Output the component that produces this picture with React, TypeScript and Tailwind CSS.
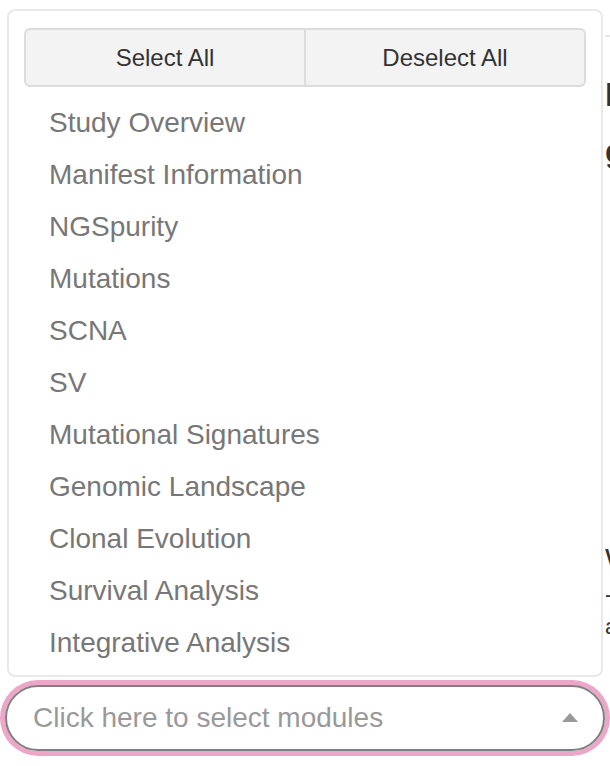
import React from "react";

const items = [
  "Study Overview",
  "Manifest Information",
  "NGSpurity",
  "Mutations",
  "SCNA",
  "SV",
  "Mutational Signatures",
  "Genomic Landscape",
  "Clonal Evolution",
  "Survival Analysis",
  "Integrative Analysis",
];

export default function App() {
  return (
    <div
      className="relative w-[610px] h-[766px] bg-white flex overflow-hidden"
      style={{ fontFamily: '"Liberation Sans", Arial, Helvetica, sans-serif' }}
    >
      {/* left column with select */}
      <div className="w-[605px] shrink-0 flex flex-col justify-end pl-[5px] pb-[15px]">
        <div className="relative w-[600px]">
          {/* dropdown menu (dropup) */}
          <div className="absolute left-[2px] bottom-[calc(100%+8px)] w-[596px] bg-white border-2 border-[#e9e9e9] rounded-[8px] pt-[17px] pb-[6px] z-10">
            <div className="flex px-[15px]">
              <button className="w-[282px] h-[59px] bg-[#f3f3f3] border-2 border-[#dcdcdc] rounded-l-[6px] text-[24px] text-[#333]">
                Select All
              </button>
              <button className="w-[282px] h-[59px] -ml-[2px] bg-[#f3f3f3] border-2 border-[#dcdcdc] rounded-r-[6px] text-[24px] text-[#333]">
                Deselect All
              </button>
            </div>
            <ul className="mt-[10px]">
              {items.map((t) => (
                <li
                  key={t}
                  className="h-[52px] pl-[40px] flex items-center text-[28px] leading-[40px] text-[#777] whitespace-nowrap"
                >
                  {t}
                </li>
              ))}
            </ul>
          </div>
          {/* select button */}
          <div className="h-[66px] rounded-full border-2 border-[#7f7f7f] shadow-[0_0_0_5px_#eca6c8] flex items-center pl-[26px] pr-[25px]">
            <span className="flex-1 text-[28px] text-[#999] whitespace-nowrap">
              Click here to select modules
            </span>
            <svg width="16" height="9" viewBox="0 0 16 9" className="mt-[-2px]">
              <polygon points="0,9 8,0 16,9" fill="#999" />
            </svg>
          </div>
        </div>
      </div>
      {/* background content peeking at right */}
      <div className="flex-1 min-w-0 overflow-hidden mt-[35px] border-t-2 border-[#e6e6e6] text-[#333] whitespace-nowrap">
        <div className="mt-[38px] text-[32px] font-bold leading-[40px]">h</div>
        <div className="mt-[16px] text-[32px] font-bold leading-[40px]">g</div>
        <div className="mt-[370px] text-[30px] leading-[36px]">W</div>
        <div className="mt-[4px] text-[22px] leading-[28px]">-</div>
        <div className="mt-[4px] text-[22px] leading-[28px]">a</div>
      </div>
    </div>
  );
}
